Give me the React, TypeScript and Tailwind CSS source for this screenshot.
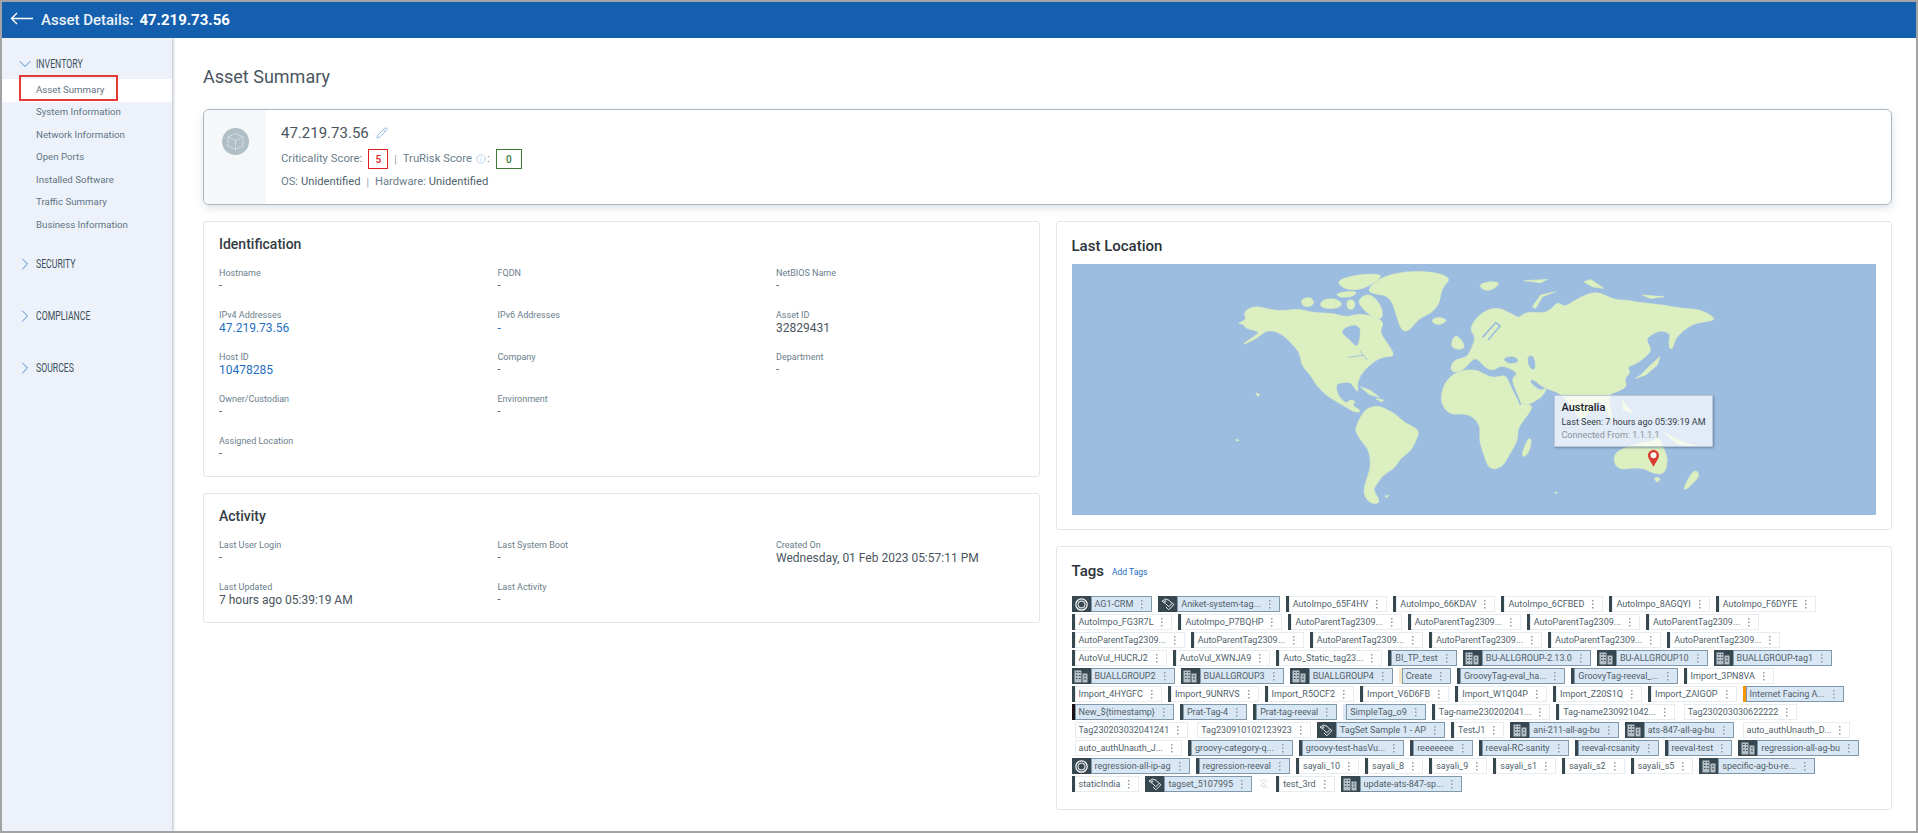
import { ChevronDown, ChevronRight, Info, Pencil, PinOff } from "lucide-react";

type TagDef = { t: string; blue?: boolean; bar?: string; icon?: "ring" | "tags" | "bldg" };

const dark = "#37474f";
const p = (t: string): TagDef => ({ t, bar: dark });
const n = (t: string): TagDef => ({ t, bar: "transparent" });
const b = (t: string, bar = dark): TagDef => ({ t, blue: true, bar });
const ic = (t: string, icon: "ring" | "tags" | "bldg"): TagDef => ({ t, blue: true, icon });
const parent = "AutoParentTag2309...";

const tagRows: TagDef[][] = [
  [ic("AG1-CRM", "ring"), ic("Aniket-system-tag...", "tags"), p("AutoImpo_65F4HV"), p("AutoImpo_66KDAV"), p("AutoImpo_6CFBED"), p("AutoImpo_8AGQYI"), p("AutoImpo_F6DYFE")],
  [p("AutoImpo_FG3R7L"), p("AutoImpo_P7BQHP"), p(parent), p(parent), p(parent), p(parent)],
  [p(parent), p(parent), p(parent), p(parent), p(parent), p(parent)],
  [p("AutoVul_HUCRJ2"), p("AutoVul_XWNJA9"), p("Auto_Static_tag23..."), b("BI_TP_test"), ic("BU-ALLGROUP-2.13.0", "bldg"), ic("BU-ALLGROUP10", "bldg"), ic("BUALLGROUP-tag1", "bldg")],
  [ic("BUALLGROUP2", "bldg"), ic("BUALLGROUP3", "bldg"), ic("BUALLGROUP4", "bldg"), b("Create", "#f6e7c4"), b("GroovyTag-eval_ha..."), b("GroovyTag-reeval_..."), p("Import_3PN8VA")],
  [p("Import_4HYGFC"), p("Import_9UNRVS"), p("Import_R5OCF2"), p("Import_V6D6FB"), p("Import_W1Q04P"), p("Import_Z20S1Q"), p("Import_ZAIGOP"), b("Internet Facing A...", "#f59300")],
  [b("New_${timestamp}", "#1a0f14"), b("Prat-Tag-4"), b("Prat-tag-reeval"), b("SimpleTag_o9", "#d9e6f3"), p("Tag-name230202041..."), p("Tag-name230921042..."), n("Tag230203030622222")],
  [n("Tag230203032041241"), n("Tag230910102123923"), ic("TagSet Sample 1 - AP", "tags"), p("TestJ1"), ic("ani-211-all-ag-bu", "bldg"), ic("ats-847-all-ag-bu", "bldg"), n("auto_authUnauth_D...")],
  [n("auto_authUnauth_J..."), b("groovy-category-q..."), b("groovy-test-hasVu..."), b("reeeeeee"), b("reeval-RC-sanity"), b("reeval-rcsanity"), b("reeval-test"), ic("regression-all-ag-bu", "bldg")],
  [ic("regression-all-ip-ag", "ring"), b("regression-reeval"), p("sayali_10"), p("sayali_8"), p("sayali_9"), p("sayali_s1"), p("sayali_s2"), p("sayali_s5"), ic("specific-ag-bu-re...", "bldg")],
];

function TagIcon({ kind }: { kind: "ring" | "tags" | "bldg" }) {
  return (
    <div className="flex h-full w-[19px] shrink-0 items-center justify-center bg-[#37474f]">
      {kind === "ring" && (
        <svg width="13" height="13" viewBox="0 0 13 13" fill="none">
          <circle cx="6.5" cy="6.5" r="5.7" stroke="#fff" strokeWidth="1.2" />
          <circle cx="6.5" cy="6.5" r="3.4" stroke="#cfd8dc" strokeWidth="1.2" />
        </svg>
      )}
      {kind === "tags" && (
        <svg width="14" height="13" viewBox="0 0 14 13" fill="none" stroke="#e8edf0" strokeWidth="1">
          <path d="M1 3.200 4.500 1l3.500 1.200 3 3.400-3.200 3.200-3.400-3.400z" />
          <path d="M5 9l2.800 2.800 5-5-1.800-2.200" />
          <circle cx="4.200" cy="3.400" r=".7" />
        </svg>
      )}
      {kind === "bldg" && (
        <svg width="14" height="13" viewBox="0 0 14 13" fill="#b4bfc7">
          <path d="M0.500 0.500h7v12h-7z" />
          <path d="M8.500 3.500h5v9h-5z" />
          <path d="M2 2h1.500v1H2zM5 2h1.500v1H5zM2 5h1.500v1H2zM5 5h1.500v1H5zM2 8h1.500v1H2zM5 8h1.500v1H5zM10 5.500h2v1h-2zM10 8.500h2v1h-2z" fill="#37474f" />
        </svg>
      )}
    </div>
  );
}

function Dots() {
  return (
    <svg width="2" height="9" viewBox="0 0 2 9" fill="#8d9ca6" className="shrink-0">
      <rect y="0" width="1.5" height="1.5" />
      <rect y="3.500" width="1.5" height="1.5" />
      <rect y="7" width="1.5" height="1.5" />
    </svg>
  );
}

function Tag({ t, blue, bar, icon }: TagDef) {
  return (
    <div className="flex h-[16px] items-stretch">
      {icon ? <TagIcon kind={icon} /> : <div className="w-[3px] shrink-0" style={{ background: bar }} />}
      <div
        className={`flex items-center gap-[8px] border pl-[3px] pr-[8px] text-[9px] leading-none ${
          blue ? "border-[#7f98ab] bg-[#d9e6f3] text-[#4f5f6b]" : "border-[#e6ecf0] bg-white text-[#4f5f6b]"
        }`}
      >
        <span className="whitespace-nowrap">{t}</span>
        <Dots />
      </div>
    </div>
  );
}

function NavItem({ label, active }: { label: string; active?: boolean }) {
  return (
    <div className={`relative flex h-[22.500px] items-center pl-[34px] text-[9.700px] text-[#5f7484] ${active ? "bg-white" : ""}`}>
      {label}
      {active && <div className="absolute left-[17px] top-[-4px] h-[26px] w-[99px] border-2 border-[#e53935]" />}
    </div>
  );
}

function NavHead({ label, open }: { label: string; open?: boolean }) {
  return (
    <div className="flex h-[18px] items-center pl-[13px]">
      <div className="w-[21px] shrink-0">
        {open ? (
          <ChevronDown size={20} strokeWidth={1} className="text-[#2f78c4]" />
        ) : (
          <ChevronRight size={20} strokeWidth={1} className="text-[#2f78c4]" />
        )}
      </div>
      <span className="origin-left scale-x-[0.67] whitespace-nowrap text-[13px] text-[#3c4f5c]">{label}</span>
    </div>
  );
}

function Field({ label, value, link, big }: { label: string; value: string; link?: boolean; big?: boolean }) {
  return (
    <div>
      <div className="h-[13px] text-[9px] leading-[15px] text-[#6a7e8c]">{label}</div>
      <div className={`h-[14px] leading-[14px] ${big || link ? "text-[12px]" : "text-[11px]"} ${link ? "text-[#1f6fc4]" : "text-[#4a5560]"}`}>
        {value}
      </div>
    </div>
  );
}

// rounds a polygon's corners so the coasts don't look cut with scissors
function smooth(pts: string) {
  const a = pts.trim().split(/\s+/).map(Number);
  const xy: [number, number][] = [];
  for (let i = 0; i < a.length; i += 2) xy.push([a[i], a[i + 1]]);
  const mid = (u: [number, number], v: [number, number]) => `${(u[0] + v[0]) / 2} ${(u[1] + v[1]) / 2}`;
  let d = `M${mid(xy[xy.length - 1], xy[0])}`;
  xy.forEach((q, i) => {
    d += `Q${q[0]} ${q[1]} ${mid(q, xy[(i + 1) % xy.length])}`;
  });
  return d + "Z";
}

function WorldMap() {
  const land = "#dcefc0";
  const sea = "#9dbde0";
  return (
    <svg viewBox="0 0 805 251" className="block h-[251px] w-full" style={{ background: sea }}>
      {/* americas, greenland */}
      <g transform="translate(-11 -4) scale(0.3444 0.3333)" fill={land} stroke={land} strokeWidth="2" strokeLinejoin="round">
        <path d={smooth("530 160 545 145 570 138 610 150 650 152 690 146 730 158 790 160 815 168 838 170 860 162 900 166 940 185 925 215 945 245 972 288 940 290 915 300 880 330 860 365 864 400 850 380 840 365 815 368 800 372 800 395 812 415 830 432 838 418 858 425 845 435 860 445 872 454 855 458 830 442 800 425 770 405 745 380 725 345 698 315 695 280 670 250 640 220 600 208 570 235 520 258 560 230 580 215 535 205 530 190 510 192 540 178")} />
        <path d={smooth("860 122 890 100 915 115 935 150 932 178 905 170 880 150")} />
        <path d={smooth("800 62 860 43 937 42 915 65 880 85 850 90 820 85")} />
        <path d={smooth("760 118 800 115 820 135 790 148 750 140")} />
        <path d={smooth("695 118 728 110 737 135 705 142")} />
        <path d={smooth("800 98 862 92 850 110 805 112")} />
        <path d={smooth("832 118 856 122 850 150 830 145")} />
        <path d={smooth("892 85 930 52 1000 33 1085 36 1135 54 1105 85 1100 130 1075 160 1040 175 1010 214 990 212 975 170 965 130 945 105 900 100")} />
        <path d={smooth("1076 181 1095 171 1122 180 1105 194 1085 192")} />
        <path d={smooth("858 500 870 470 890 443 925 438 950 450 975 465 1000 490 1043 510 1030 545 1015 575 985 595 970 625 935 645 920 670 905 690 930 726 905 734 882 712 880 680 895 640 900 610 895 570 870 540 855 512")} />
        <path d="M870 380 900 392 925 412 895 403zM915 416 938 420 930 426z" />
        <path d="M566 398 578 404 572 410zM508 538 518 541 510 543zM942 708 952 706 946 714z" />
        <path d={smooth("812 215 840 195 870 200 866 240 860 262 835 235")} fill={sea} stroke={sea} />
        <path d="M725 360 755 395" stroke={sea} strokeWidth="3" fill="none" />
        <path d="M835 292 878 286M868 272 890 300" stroke={sea} strokeWidth="2.500" fill="none" />
      </g>
      {/* africa, eurasia, australia */}
      <g transform="translate(329 -14) scale(0.3333)" fill={land} stroke={land} strokeWidth="2" strokeLinejoin="round">
        <path d={smooth("150 368 153 335 180 325 200 320 215 290 225 260 205 235 240 188 290 170 340 195 355 205 375 185 430 190 455 175 470 155 490 170 510 160 540 140 590 123 640 150 680 150 700 155 740 160 790 165 840 175 900 178 948 206 920 215 880 220 850 240 825 265 806 300 805 270 810 250 780 240 750 255 735 270 755 300 730 325 700 345 680 350 690 370 670 385 680 410 650 425 620 435 640 522 610 470 590 445 545 524 505 455 470 425 430 415 395 385 385 395 420 425 442 410 420 447 360 472 330 385 350 375 340 360 300 345 280 362 255 355 225 320 205 340 185 362")} />
        <path d={smooth("120 436 135 393 170 363 225 358 250 373 280 385 315 373 330 410 355 460 398 465 385 490 350 535 352 570 325 615 305 652 265 660 248 610 235 570 240 530 218 500 185 490 150 495 125 468")} />
        <path d="M705 385 720 375 750 345 778 320 770 345 735 375z" />
        <path d="M808 296 830 230 835 240 815 295z" />
        <path d={smooth("148 287 165 248 197 292 170 300")} />
        <path d={smooth("230 105 270 93 302 100 260 127")} />
        <path d="M395 170 420 135 465 125 425 140 405 175z" />
        <path d="M370 92 440 88 420 98zM550 95 570 88 610 115 575 110zM725 135 790 140 750 145z" />
        <path d={smooth("90 208 120 201 140 212 115 224")} />
        <path d="M665 450 695 490 668 480zM790 548 850 578 890 590 830 582z" />
        <path d={smooth("636 612 680 590 735 575 760 575 770 556 788 590 803 630 792 672 760 672 720 650 648 662")} />
        <path d={smooth("758 682 782 684 770 700")} />
        <path d={smooth("848 716 880 656 900 675 870 707 855 720")} />
        <path d={smooth("360 618 385 558 394 578 378 620")} />
        <path d="M462 728 470 726 466 732z" />
        <path d={smooth("305 325 340 318 356 335 325 342")} fill={sea} stroke={sea} />
        <path d={smooth("380 318 400 318 404 362 385 352")} fill={sea} stroke={sea} />
        <path d="M330 390 360 465" stroke={sea} strokeWidth="5" fill="none" />
        <path d="M245 262 285 218 298 228 262 270" stroke={sea} strokeWidth="5" fill="none" />
      </g>
    </svg>
  );
}

export default function App() {
  return (
    <div className="flex h-[833px] flex-col overflow-hidden border-2 border-[#a3a3a3] bg-white font-['Roboto',sans-serif]">
      <header className="flex h-[36px] shrink-0 items-center bg-[#1460ae] pl-[8px] text-[15px] text-[#eaf1f9]">
        <svg width="24" height="14" viewBox="0 0 24 14" fill="none" stroke="#fff" strokeWidth="1.4" className="mb-[2px]">
          <path d="M23 6.500H1M7 1 1.500 6.500 7 12" />
        </svg>
        <span className="ml-[7px] font-medium">Asset Details:</span>
        <span className="ml-[6px] font-bold text-white">47.219.73.56</span>
      </header>

      <div className="flex min-h-0 flex-1">
        <aside className="w-[170px] shrink-0 bg-[#edf2fa] pt-[17px] shadow-[1px_0_3px_rgba(70,90,110,0.45)]">
          <NavHead label="INVENTORY" open />
          <div className="mb-[18px] mt-[6px]">
            <NavItem label="Asset Summary" active />
            <NavItem label="System Information" />
            <NavItem label="Network Information" />
            <NavItem label="Open Ports" />
            <NavItem label="Installed Software" />
            <NavItem label="Traffic Summary" />
            <NavItem label="Business Information" />
          </div>
          <div className="flex flex-col gap-[34px]">
            <NavHead label="SECURITY" />
            <NavHead label="COMPLIANCE" />
            <NavHead label="SOURCES" />
          </div>
        </aside>

        <main className="min-w-0 flex-1 pl-[31px] pr-[24px] pt-[25px]">
          <h1 className="h-[28px] text-[18px] leading-[28px] text-[#4a5560]">Asset Summary</h1>

          <section className="mt-[18px] flex h-[96px] overflow-hidden rounded-[6px] border border-[#a9b7c2] bg-white shadow-[0_3px_9px_rgba(120,140,155,0.25)]">
            <div className="flex w-[62px] shrink-0 justify-center bg-[#f5f7f9] pt-[18px]">
              <svg width="27" height="27" viewBox="0 0 27 27" fill="none">
                <circle cx="13.500" cy="13.500" r="13.500" fill="#b0bec5" />
                <path d="M13.500 5.500 21 9v9l-7.500 3.500L6 18V9zM6 9l7.500 3.500L21 9M13.500 12.500v9" stroke="#e4eaed" strokeWidth="1" strokeDasharray="1.500 .8" />
              </svg>
            </div>
            <div className="pl-[15px] pt-[13px]">
              <div className="flex h-[20px] items-center text-[15px] text-[#4a5560]">
                47.219.73.56
                <Pencil size={12} strokeWidth={1.4} className="ml-[7px] text-[#6f9fd6]" />
              </div>
              <div className="mt-[6px] flex h-[20px] items-center text-[11.300px] text-[#6a7e8c]">
                Criticality Score:
                <span className="ml-[6px] flex h-[20px] w-[20px] items-center justify-center border border-[#e0201c] text-[10px] font-medium text-[#e0201c]">5</span>
                <span className="mx-[6px] text-[10px] text-[#8a9aa6]">|</span>
                TruRisk Score
                <Info size={10} strokeWidth={1.2} className="ml-[4px] text-[#7aa9dc]" />
                <span className="ml-[1px]">:</span>
                <span className="ml-[6px] flex h-[20px] w-[26px] items-center justify-center border border-[#3d7a35] text-[10px] font-medium text-[#3d7a35]">0</span>
              </div>
              <div className="mt-[6px] flex h-[14px] items-center text-[11.200px] text-[#6a7e8c]">
                OS:
                <span className="ml-[3px] text-[#4f5f6b]">Unidentified</span>
                <span className="mx-[6px] text-[10px] text-[#8a9aa6]">|</span>
                Hardware:
                <span className="ml-[3px] text-[#4f5f6b]">Unidentified</span>
              </div>
            </div>
          </section>

          <div className="mt-[16px] grid grid-cols-2 gap-x-[16px]">
            <div className="flex flex-col gap-[16px]">
              <section className="h-[256px] rounded-[3px] border border-[#e3e7ea] pl-[15px] pt-[12px]">
                <h2 className="h-[20px] text-[14px] font-medium leading-[20px] text-[#333c44]">Identification</h2>
                <div className="mt-[12px] grid grid-cols-[278.500px_278.500px_1fr] gap-y-[15px]">
                  <Field label="Hostname" value="-" />
                  <Field label="FQDN" value="-" />
                  <Field label="NetBIOS Name" value="-" />
                  <Field label="IPv4 Addresses" value="47.219.73.56" link />
                  <Field label="IPv6 Addresses" value="-" link />
                  <Field label="Asset ID" value="32829431" big />
                  <Field label="Host ID" value="10478285" link />
                  <Field label="Company" value="-" />
                  <Field label="Department" value="-" />
                  <Field label="Owner/Custodian" value="-" />
                  <Field label="Environment" value="-" />
                  <div />
                  <Field label="Assigned Location" value="-" />
                </div>
              </section>

              <section className="h-[130px] rounded-[3px] border border-[#e3e7ea] pl-[15px] pt-[12px]">
                <h2 className="h-[20px] text-[14px] font-medium leading-[20px] text-[#333c44]">Activity</h2>
                <div className="mt-[12px] grid grid-cols-[278.500px_278.500px_1fr] gap-y-[15px]">
                  <Field label="Last User Login" value="-" />
                  <Field label="Last System Boot" value="-" />
                  <Field label="Created On" value="Wednesday, 01 Feb 2023 05:57:11 PM" big />
                  <Field label="Last Updated" value="7 hours ago 05:39:19 AM" big />
                  <Field label="Last Activity" value="-" />
                </div>
              </section>
            </div>

            <div className="flex flex-col gap-[16px]">
              <section className="h-[309px] rounded-[3px] border border-[#e3e7ea] px-[15px] pt-[14px]">
                <h2 className="h-[20px] text-[15px] font-medium leading-[20px] text-[#2b3238]">Last Location</h2>
                <div className="relative mt-[8px]">
                  <WorldMap />
                  <div className="absolute left-[482px] top-[131px] h-[52px] w-[159px] border border-[#b9c8d8] bg-white/70 pl-[7px] pt-[4px] shadow-[1px_1px_2px_rgba(60,80,100,0.5)]">
                    <div className="text-[11px] font-medium leading-[15px] text-[#20262b]">Australia</div>
                    <div className="mt-[1px] whitespace-nowrap text-[9px] leading-[13px] text-[#333c44]">Last Seen: 7 hours ago 05:39:19 AM</div>
                    <div className="whitespace-nowrap text-[9px] leading-[12px] text-[#8a949c]">Connected From: 1.1.1.1</div>
                  </div>
                  <svg width="11" height="17" viewBox="0 0 11 17" className="absolute left-[576px] top-[186px]">
                    <path d="M5.500 0C2.400 0 0 2.400 0 5.500c0 3 3.500 7 5.500 11.500C7.500 12.500 11 8.500 11 5.500 11 2.400 8.600 0 5.500 0z" fill="#d93a32" />
                    <circle cx="5.500" cy="5.300" r="3" fill="#f4f7ee" />
                  </svg>
                </div>
              </section>

              <section className="h-[264px] rounded-[3px] border border-[#e3e7ea] px-[15px] pt-[14px]">
                <div className="flex h-[20px] items-center">
                  <h2 className="text-[15px] font-medium text-[#2b3238]">Tags</h2>
                  <span className="ml-[8px] mt-[3px] text-[8.500px] text-[#1a6ac0]">Add Tags</span>
                </div>
                <div className="mt-[15px] flex flex-col gap-[2px]">
                  {tagRows.map((row, i) => (
                    <div key={i} className="flex gap-[6px]">
                      {row.map((tag, j) => (
                        <Tag key={j} {...tag} />
                      ))}
                    </div>
                  ))}
                  <div className="flex items-center gap-[6px]">
                    <Tag {...p("staticIndia")} />
                    <Tag {...ic("tagset_5107995", "tags")} />
                    <PinOff size={10} strokeWidth={1.2} className="mx-[1px] text-[#b9c4cc]" />
                    <Tag {...p("test_3rd")} />
                    <Tag {...ic("update-ats-847-sp...", "bldg")} />
                  </div>
                </div>
              </section>
            </div>
          </div>
        </main>
      </div>
    </div>
  );
}
